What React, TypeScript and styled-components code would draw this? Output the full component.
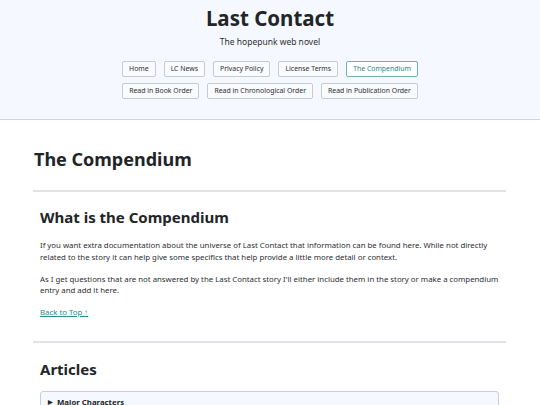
import React from "react";
import styled, { createGlobalStyle } from "styled-components";

const Global = createGlobalStyle`
  html, body { margin: 0; padding: 0; background: #ffffff; }
  body { font-family: "Noto Sans", "Open Sans", sans-serif; color: #222428; }
  * { box-sizing: border-box; }
`;

const Header = styled.header`
  background: #f5f8fe;
  border-bottom: 1px solid #cfd3da;
  padding: 6px 0 20px;
  text-align: center;
`;

const SiteTitle = styled.h1`
  margin: 0;
  font-size: 20.5px;
  line-height: 24px;
  font-weight: 700;
  color: #222428;
`;

const Tagline = styled.p`
  margin: 6px 0 0;
  font-size: 8.5px;
  line-height: 12px;
  color: #2c2e33;
`;

const Nav = styled.nav`
  margin-top: 13px;
  display: flex;
  flex-direction: column;
  align-items: center;
  gap: 6px;
`;

const NavRow = styled.div`
  display: flex;
  justify-content: center;
  gap: 8px;
`;

const NavButton = styled.a<{ $active?: boolean }>`
  display: block;
  font-size: 6.9px;
  line-height: 10px;
  padding: 2px 6px;
  border: 1px solid ${(p) => (p.$active ? "#6fb3ae" : "#c6cad2")};
  border-radius: 2px;
  background: ${(p) => (p.$active ? "#ffffff" : "#fafbfd")};
  color: ${(p) => (p.$active ? "#2d8a85" : "#2c2e33")};
  text-decoration: none;
  white-space: nowrap;
`;

const Main = styled.main`
  padding: 28px 34px 0 33px;
`;

const PageTitle = styled.h1`
  margin: 0;
  font-size: 18px;
  line-height: 22px;
  font-weight: 700;
  padding-left: 1px;
`;

const Rule = styled.hr<{ $gap: number }>`
  margin: ${(p) => p.$gap}px 0 0;
  border: 0;
  height: 1.5px;
  background: #e2e3e6;
`;

const Section = styled.section<{ $top: number }>`
  padding: ${(p) => p.$top}px 3px 0 7px;
`;

const SectionTitle = styled.h2`
  margin: 0;
  font-size: 15px;
  line-height: 19px;
  font-weight: 700;
`;

const Para = styled.p`
  margin: 0 0 10px;
  font-size: 7.82px;
  line-height: 11.8px;
  color: #2c2e33;
  &:first-of-type { margin-top: 13px; }
`;

const BackRow = styled.div`
  font-size: 7.82px;
  line-height: 11.8px;
`;

const BackLink = styled.a`
  color: #2b8c8a;
  text-decoration: underline;
`;

const Details = styled.details`
  margin: 12px 4px 0 0;
  background: #f5f8fe;
  border: 1px solid #c9cdd6;
  border-radius: 3px;
  padding: 5px 7px;
`;

const Summary = styled.summary`
  list-style: none;
  font-size: 7.82px;
  line-height: 11px;
  font-weight: 700;
  display: flex;
  align-items: center;
  gap: 4px;
  &::-webkit-details-marker { display: none; }
`;

const Marker = styled.span`
  font-size: 5.5px;
`;

const topNav = ["Home", "LC News", "Privacy Policy", "License Terms", "The Compendium"];
const orderNav = ["Read in Book Order", "Read in Chronological Order", "Read in Publication Order"];

export default function App() {
  return (
    <>
      <Global />
      <Header>
        <SiteTitle>Last Contact</SiteTitle>
        <Tagline>The hopepunk web novel</Tagline>
        <Nav>
          <NavRow>
            {topNav.map((t) => (
              <NavButton key={t} $active={t === "The Compendium"}>{t}</NavButton>
            ))}
          </NavRow>
          <NavRow>
            {orderNav.map((t) => (
              <NavButton key={t}>{t}</NavButton>
            ))}
          </NavRow>
        </Nav>
      </Header>
      <Main>
        <PageTitle>The Compendium</PageTitle>
        <Rule $gap={20} />
        <Section $top={16.5}>
          <SectionTitle>What is the Compendium</SectionTitle>
          <Para>
            If you want extra documentation about the universe of Last Contact that information can be found here. While not directly related to the story it can help give some specifics that help provide a little more detail or context.
          </Para>
          <Para>
            As I get questions that are not answered by the Last Contact story I'll either include them in the story or make a compendium entry and add it here.
          </Para>
          <BackRow>
            <BackLink href="#">Back to Top ↑</BackLink>
          </BackRow>
        </Section>
        <Rule $gap={22.5} />
        <Section $top={17.5}>
          <SectionTitle>Articles</SectionTitle>
          <Details>
            <Summary><Marker>▶</Marker>Major Characters</Summary>
          </Details>
        </Section>
      </Main>
    </>
  );
}
